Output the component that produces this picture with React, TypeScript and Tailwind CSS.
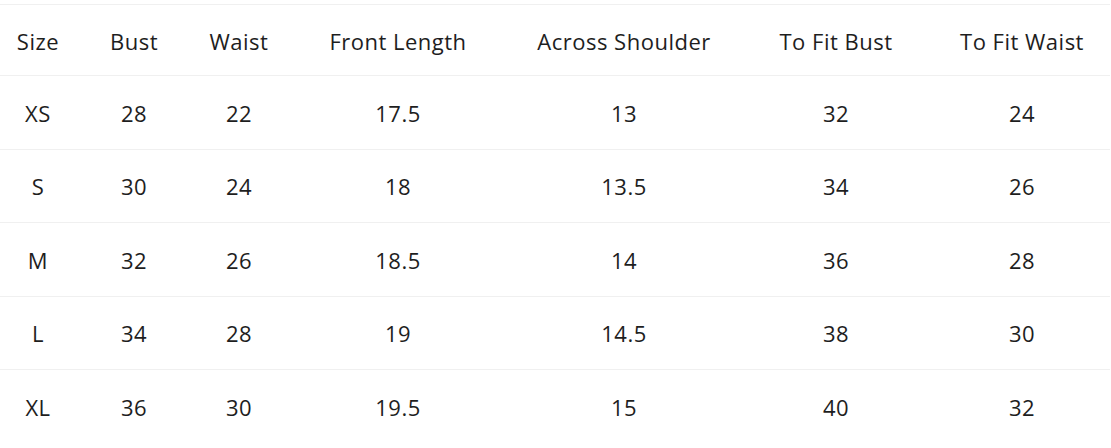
const headers = ['Size', 'Bust', 'Waist', 'Front Length', 'Across Shoulder', 'To Fit Bust', 'To Fit Waist']

const widths = ['w-[76px]', 'w-[116px]', 'w-[94px]', 'w-[224px]', 'w-[228px]', 'w-[196px]', 'w-[176px]']

const rows = [
  ['XS', '28', '22', '17.5', '13', '32', '24'],
  ['S', '30', '24', '18', '13.5', '34', '26'],
  ['M', '32', '26', '18.5', '14', '36', '28'],
  ['L', '34', '28', '19', '14.5', '38', '30'],
  ['XL', '36', '30', '19.5', '15', '40', '32'],
]

export default function App() {
  return (
    <div className="w-[1111px] h-[448px] bg-white pt-1 overflow-hidden font-['Open_Sans',sans-serif] text-[22px] tracking-[0.5px] text-[#1e1e1e]">
      <table className="w-[1110px] table-fixed border-collapse border-t border-[#f0f0f0]">
        <thead>
          <tr className="h-[71px] border-b border-[#f0f0f0]">
            {headers.map((h, i) => (
              <th key={h} className={`${widths[i]} font-normal text-center pt-0.5`}>
                {h}
              </th>
            ))}
          </tr>
        </thead>
        <tbody>
          {rows.map((r, ri) => (
            <tr
              key={r[0]}
              className={ri < rows.length - 1 ? 'h-[73.5px] border-b border-[#f0f0f0]' : 'h-[73.5px]'}
            >
              {r.map((c, i) => (
                <td key={i} className="text-center pt-0.5">
                  {c}
                </td>
              ))}
            </tr>
          ))}
        </tbody>
      </table>
    </div>
  )
}
